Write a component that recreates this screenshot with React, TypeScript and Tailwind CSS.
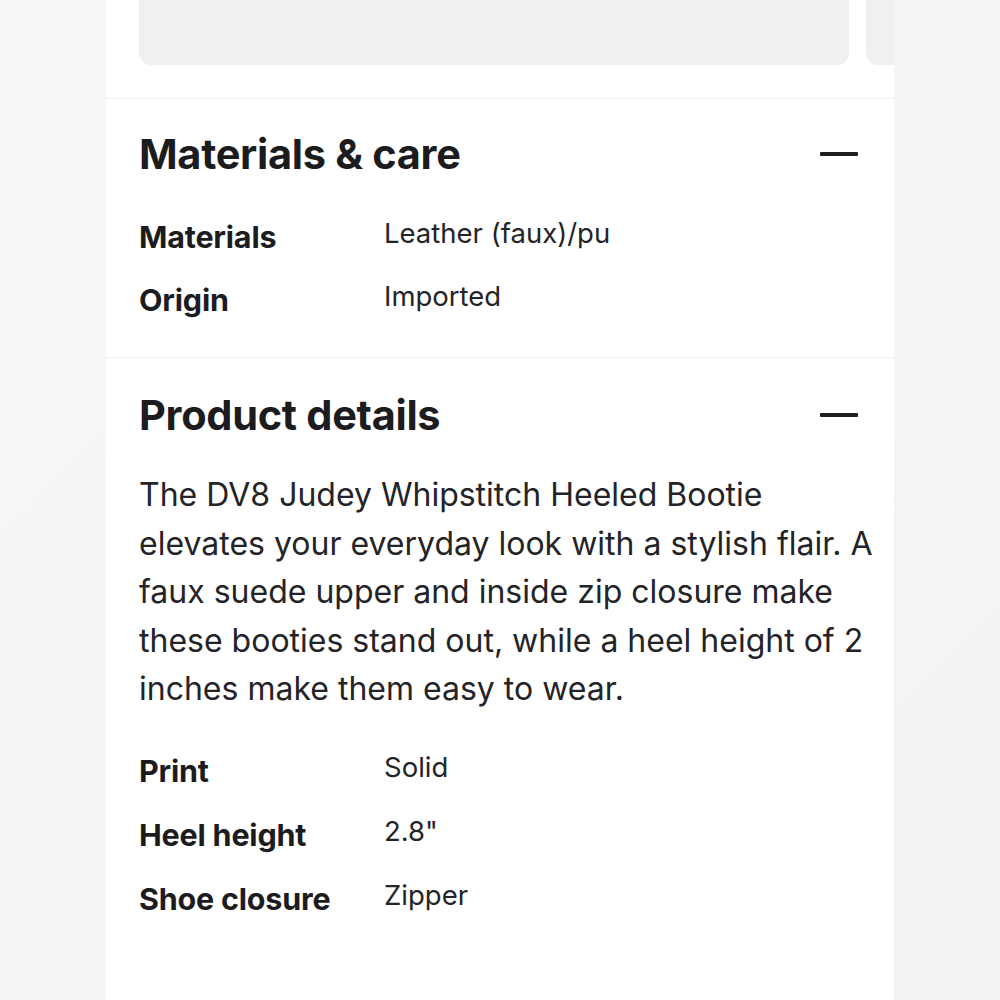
const materials = [
  { label: 'Materials', value: 'Leather (faux)/pu' },
  { label: 'Origin', value: 'Imported' },
];

const details = [
  { label: 'Print', value: 'Solid' },
  { label: 'Heel height', value: '2.8"' },
  { label: 'Shoe closure', value: 'Zipper' },
];

function Minus() {
  return <div className="w-[38px] h-[4px] bg-[#1f1f22] rounded-[1px]" />;
}

function SpecRow({ label, value }: { label: string; value: string }) {
  return (
    <div className="flex items-start h-[36px]">
      <div className="w-[245px] text-[30.5px] leading-[36px] font-bold tracking-[-0.2px] text-[#1c1c1f]">
        {label}
      </div>
      <div className="text-[27.5px] leading-[28px] text-[#242428]">{value}</div>
    </div>
  );
}

export default function App() {
  return (
    <div
      className="w-full h-[1000px] overflow-hidden flex justify-center bg-gradient-to-br from-[#f7f7f9] to-[#f3f3f5]"
      style={{ fontFamily: 'Inter, "Open Sans", sans-serif' }}
    >
      <div className="w-[788px] h-full bg-white overflow-hidden">
        <div className="flex gap-[17px] pl-[33px]">
          <div className="w-[710px] h-[65px] shrink-0 rounded-b-[12px] bg-[#eff0f2]" />
          <div className="w-[200px] h-[65px] shrink-0 rounded-b-[12px] bg-[#eff0f2]" />
        </div>

        <div className="mt-[33px] border-t border-[#f0f0f2] pl-[33px] pr-[36px] pt-[29px] pb-[39px]">
          <div className="flex items-center justify-between h-[52px]">
            <h2 className="text-[41.5px] leading-[52px] font-bold tracking-[-0.3px] text-[#1c1c1f]">
              Materials &amp; care
            </h2>
            <Minus />
          </div>
          <div className="mt-[39px] flex flex-col gap-[27px]">
            {materials.map((row) => (
              <SpecRow key={row.label} {...row} />
            ))}
          </div>
        </div>

        <div className="border-t border-[#f0f0f2] pl-[33px] pr-[36px] pt-[31px]">
          <div className="flex items-center justify-between h-[52px]">
            <h2 className="text-[41.5px] leading-[52px] font-bold tracking-[-0.3px] text-[#1c1c1f]">
              Product details
            </h2>
            <Minus />
          </div>
          <p className="mt-[30px] w-[740px] text-[32px] leading-[48.5px] text-[#242428]">
            The DV8 Judey Whipstitch Heeled Bootie elevates your everyday look with a stylish flair. A faux suede
            upper and inside zip closure make these booties stand out, while a heel height of 2 inches make them
            easy to wear.
          </p>
          <div className="mt-[39px] flex flex-col gap-[28px]">
            {details.map((row) => (
              <SpecRow key={row.label} {...row} />
            ))}
          </div>
        </div>
      </div>
    </div>
  );
}
